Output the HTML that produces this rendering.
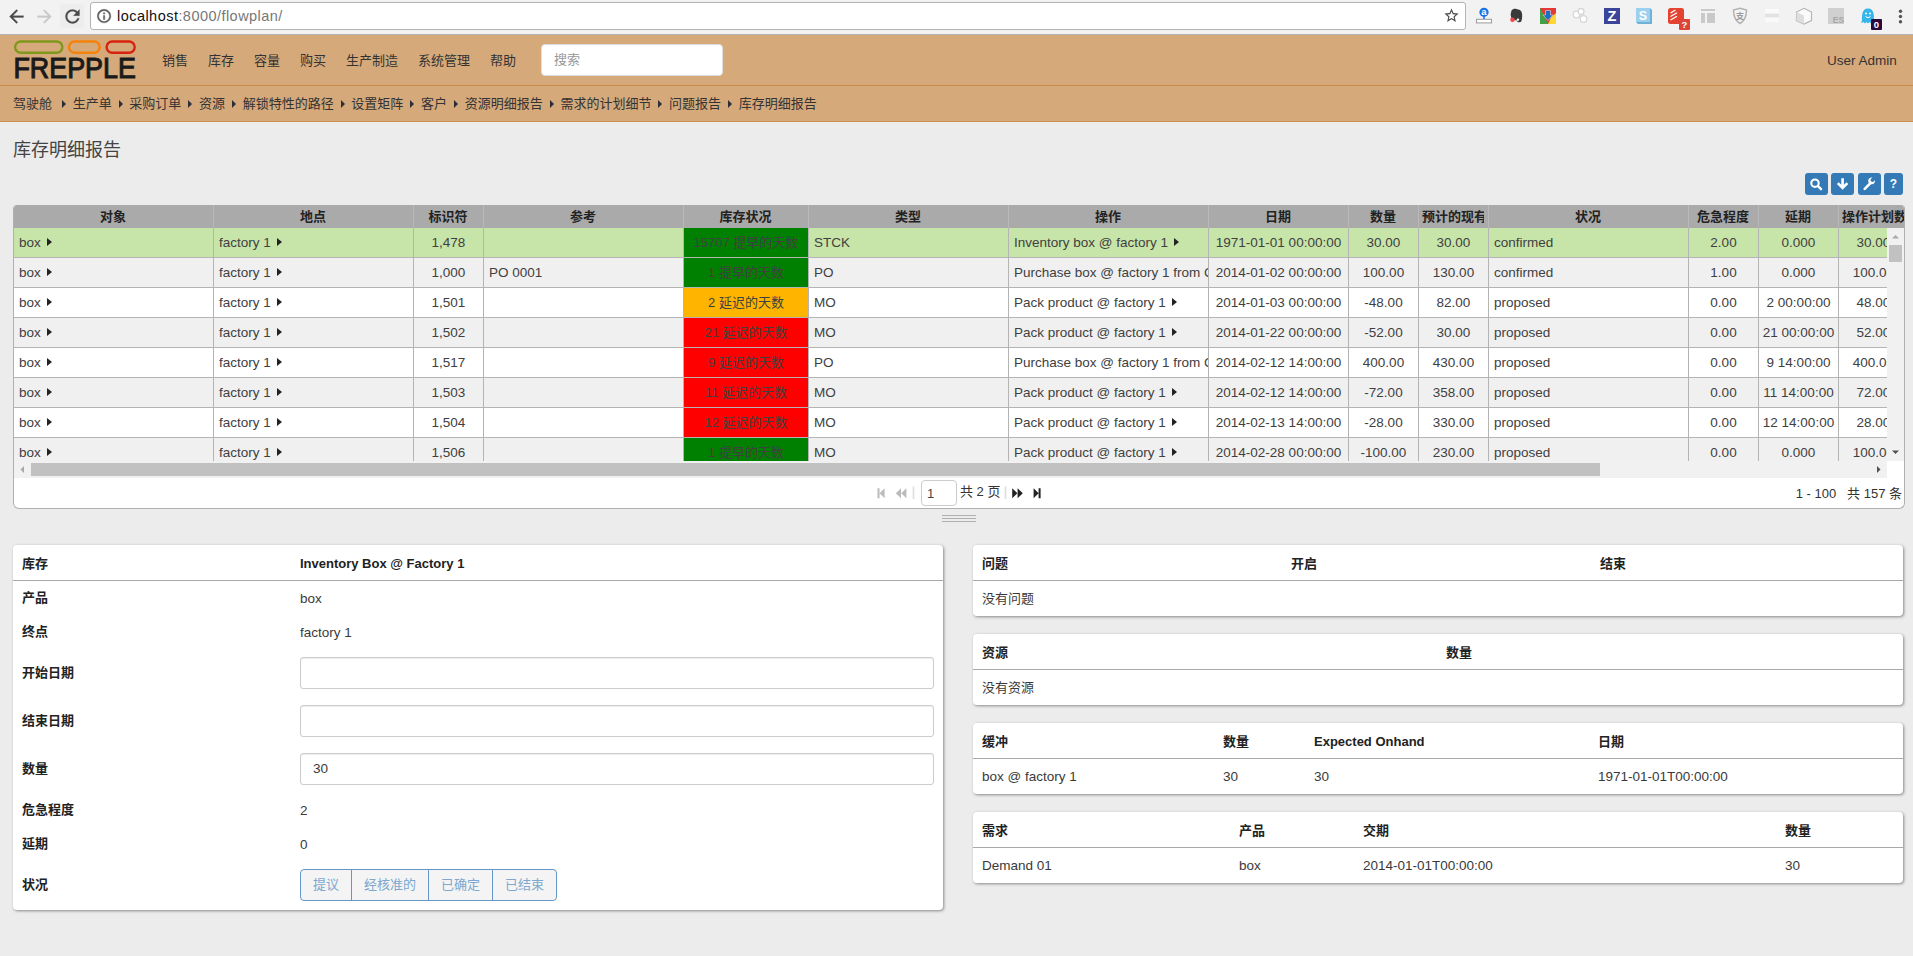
<!DOCTYPE html>
<html lang="zh-CN">
<head>
<meta charset="utf-8">
<title>库存明细报告 - frePPLe</title>
<style>
*{box-sizing:border-box}
html,body{margin:0;padding:0}
body{width:1913px;height:956px;overflow:hidden;background:#ececec;font-family:"Liberation Sans","Noto Sans CJK SC",sans-serif;font-size:13.5px;color:#3a3a3a;position:relative}
.abs{position:absolute}
/* chrome toolbar */
#chrome{left:0;top:0;width:1913px;height:35px;background:#f2f2f2;border-bottom:1px solid #b4b2b2}
#url{left:90px;top:2px;width:1376px;height:28px;background:#fff;border:1px solid #b3b3b3;border-radius:3px}
#urltxt{left:117px;top:7px;font-size:14.5px;letter-spacing:.46px;color:#777;line-height:18px;white-space:nowrap}
#urltxt b{font-weight:normal;color:#111}
/* navbar */
#nav{left:0;top:35px;width:1913px;height:87px;background:#d6a97b;border-bottom:1px solid #cc8f4e}
#navline{left:0;top:85px;width:1913px;height:1px;background:#c98a45}
.menu{top:52px;height:18px;line-height:18px;font-size:13px;color:#333;white-space:nowrap}
#search{left:541px;top:44px;width:182px;height:32px;background:#fff;border:1px solid #ddd;border-radius:4px;font-size:13px;color:#999;line-height:30px;padding-left:12px}
#crumbs{left:13px;top:95px;height:18px;line-height:18px;font-size:13px;color:#333;white-space:nowrap}
#crumbs i{display:inline-block;width:0;height:0;border-left:4px solid #2a2f3a;border-top:4px solid transparent;border-bottom:4px solid transparent;margin:0 6.67px 0 7px;vertical-align:0px}
#title{left:13px;top:137px;font-size:18px;line-height:26px;color:#444;white-space:nowrap}
/* toolbar buttons */
.tb{top:173px;height:22px;background:#337ab7;border-radius:3px}
/* grid */
#grid{left:13px;top:205px;width:1892px;height:304px;background:#fff;border:1px solid #b0b0b0;border-top:0;border-radius:4px 4px 6px 6px;overflow:hidden}
#ghead{left:0;top:0;width:1890px;height:23px;background:#aaa;white-space:nowrap;overflow:hidden;font-size:0}
.h{display:inline-block;height:23px;border-right:1px solid #b9b9b9;vertical-align:top;overflow:hidden;padding:0 4px 0 3px;text-align:center}
.h span{display:block;overflow:hidden;white-space:nowrap;font-size:13px;font-weight:bold;color:#222;line-height:24px}
#gbody{left:0;top:23px;width:1873px;height:233px;overflow:hidden}
.r{height:30px;white-space:nowrap;font-size:0;background:#fff;width:2100px}
.r.alt{background:#f0f0f0}
.r.sel{background:#c8e5a9}
.c{display:inline-block;height:30px;border-right:1px solid #b4b4b4;border-bottom:1px solid #b4b4b4;vertical-align:top;overflow:hidden;white-space:nowrap;font-size:13.5px;line-height:29px;padding:0 2px 0 5px;color:#404040}
.c.m{text-align:center;padding:0 2px}
.st-g,.st-o,.st-r{font-size:13px !important}
.st-g{background:#008000}
.st-o{background:#ffb400}
.st-r{background:#ff0000}
.tri{display:inline-block;width:0;height:0;border-left:5px solid #222;border-top:4.5px solid transparent;border-bottom:4.5px solid transparent;margin-left:6.3px;vertical-align:1px}
#vsb{left:1873px;top:23px;width:17px;height:233px;background:#f1f1f1}
#vthumb{left:2px;top:17px;width:13px;height:17px;background:#c1c1c1}
#hsb{left:0;top:256px;width:1873px;height:17px;background:#f1f1f1}
#hthumb{left:17px;top:2px;width:1569px;height:13px;background:#c1c1c1}
#pager{left:0;top:273px;width:1890px;height:30px;font-size:13px;line-height:28px;color:#333}
/* panels */
.panel{background:#fff;border-radius:4px;box-shadow:1px 1px 3px rgba(0,0,0,.42)}
.panel .hl{position:absolute;left:0;top:35px;width:100%;height:1px;background:#aaa}
.t{position:absolute;white-space:nowrap;line-height:18px;height:18px;margin-top:1px}
.t.b{font-weight:bold;color:#222;font-size:13px}
.inp{position:absolute;left:287px;width:634px;height:32px;border:1px solid #ccc;border-radius:3px;background:#fff;padding-left:12px;line-height:30px;box-shadow:inset 0 1px 1px rgba(0,0,0,.075)}
.bg{position:absolute;top:324px;height:32px;border:1px solid #6596c8;background:#f4f4f4;color:#7ba7d0;font-size:13px;line-height:30px;text-align:center}
</style>
</head>
<body>
<!-- browser chrome -->
<div id="chrome" class="abs"></div>

<svg class="abs" style="left:5.7px;top:5.5px" width="21" height="21" viewBox="0 0 24 24"><path fill="#4a4a4a" stroke="#4a4a4a" stroke-width=".3" d="M20 11H7.83l5.59-5.59L12 4l-8 8 8 8 1.41-1.41L7.83 13H20v-2z"/></svg>
<svg class="abs" style="left:33.5px;top:5.5px" width="21" height="21" viewBox="0 0 24 24"><path fill="#c9c9c9" stroke="#c9c9c9" stroke-width=".3" d="M12 4l-1.41 1.41L16.17 11H4v2h12.17l-5.58 5.59L12 20l8-8z"/></svg>
<div class="abs" style="left:60px;top:4px;width:24px;height:24px;background:#ededed;border-radius:2px"></div>
<svg class="abs" style="left:61.6px;top:5.5px" width="21" height="21" viewBox="0 0 24 24"><path fill="#4a4a4a" stroke="#4a4a4a" stroke-width=".3" d="M17.65 6.35C16.2 4.9 14.21 4 12 4c-4.42 0-7.99 3.58-7.99 8s3.57 8 7.99 8c3.73 0 6.84-2.55 7.73-6h-2.08c-.82 2.33-3.04 4-5.65 4-3.31 0-6-2.69-6-6s2.69-6 6-6c1.66 0 3.14.69 4.22 1.78L13 11h7V4l-2.35 2.35z"/></svg>
<div id="url" class="abs"></div>
<svg class="abs" style="left:95.6px;top:7.9px" width="16.2" height="16.2" viewBox="0 0 24 24"><path fill="#5a5a5a" stroke="#5a5a5a" stroke-width=".6" d="M11 17h2v-6h-2v6zm1-15C6.48 2 2 6.48 2 12s4.48 10 10 10 10-4.48 10-10S17.52 2 12 2zm0 18c-4.41 0-8-3.59-8-8s3.59-8 8-8 8 3.59 8 8-3.59 8-8 8zM11 9h2V7h-2v2z"/></svg>
<svg class="abs" style="left:1443.1px;top:7.2px" width="17" height="17" viewBox="0 0 24 24"><path fill="#4a4a4a" d="M22 9.24l-7.19-.62L12 2 9.19 8.63 2 9.24l5.46 4.73L5.82 21 12 17.27 18.18 21l-1.63-7.03L22 9.24zM12 15.4l-3.76 2.27 1-4.28-3.32-2.88 4.38-.38L12 6.1l1.71 4.04 4.38.38-3.32 2.88 1 4.28L12 15.4z"/></svg>

<div id="urltxt" class="abs"><b>localhost</b>:8000/flowplan/</div>


<svg class="abs" style="left:1470px;top:0" width="443" height="34" viewBox="1470 0 443 34" font-family="Liberation Sans, Noto Sans CJK SC, sans-serif">
<!-- 1: ruler with blue a -->
<circle cx="1484" cy="12.3" r="4.6" fill="#1a73e8"/><path d="M1484 16v3" stroke="#1a73e8" stroke-width="1.6"/>
<text x="1484" y="15.200" font-size="9.500" font-weight="bold" fill="#fff" text-anchor="middle">a</text>
<rect x="1476.5" y="19.3" width="15" height="3.6" fill="#fff" stroke="#9a9a9a" stroke-width="1"/>
<!-- 2: evernote-like -->
<path d="M1511.5 10.5c1-1.6 3-2 5-1.6 2.6.4 4.600 1.200 5.300 3.500.7 2.600.4 6.400-.4 8.600-.6 1.500-2.600 1.600-3.800 1.100-.6-.3-.4-1.300.3-1.300 1 0 1.300-.3 1.300-1.300 0-.8-.8-1.200-1.600-.9-.9.300-1 1.200-1 2.100-1.700-.3-3.300-.6-4.300-1.600-1.300-1.400-1.700-3.400-1.600-5.300z" fill="#3a3a3a"/>
<circle cx="1512.5" cy="19.800" r="2.300" fill="#f04848"/>
<!-- 3: chrome-colours download -->
<rect x="1540" y="8" width="16" height="16" fill="#e53935"/>
<path d="M1540 8v16h8l-3-6.500z" fill="#43a047"/><path d="M1556 13v11h-8l3-6.500z" fill="#fdd835"/>
<path d="M1545.500 10.500h5v4.500h2.500l-5 5.500-5-5.500h2.500z" fill="#1e6fc0" stroke="#e8f0ff" stroke-width=".5"/>
<!-- 4: three light circles -->
<g fill="#fff" stroke="#d6d6d6" stroke-width="1.3"><circle cx="1576.500" cy="14.500" r="3.300"/><circle cx="1581" cy="11.500" r="3"/><circle cx="1583.500" cy="19" r="3.300"/></g>
<!-- 5: Z -->
<rect x="1604" y="8" width="16" height="16" fill="#3c4499"/><text x="1612" y="21.300" font-size="14.500" font-weight="bold" fill="#fff" text-anchor="middle">Z</text>
<!-- 6: S cube -->
<path d="M1636 8h14l2 2v14h-14l-2-2z" fill="#6fb0d8"/><rect x="1636" y="8" width="14" height="14" fill="#9bd0ee"/><text x="1643" y="19.500" font-size="12.500" font-weight="bold" fill="#fff" text-anchor="middle">S</text>
<!-- 7: todoist + ? badge -->
<rect x="1668" y="8" width="16" height="16" rx="2.500" fill="#e44332"/>
<path d="M1670.500 13l5-3M1670.500 16.500l6.500-3.800M1670.500 20l6.500-3.800" stroke="#fff" stroke-width="1.300" fill="none"/>
<rect x="1679" y="19" width="11" height="11" rx="1" fill="#db4437"/><text x="1684.500" y="28.300" font-size="9.500" font-weight="bold" fill="#fff" text-anchor="middle">?</text>
<!-- 8: layout -->
<g fill="#c9c9c9"><rect x="1701" y="9" width="14" height="2"/><rect x="1701" y="13" width="4" height="10"/><rect x="1707" y="13" width="8" height="10"/></g>
<!-- 9: shield -->
<path d="M1740 8.300l6.500 1.700c0 6-1.500 10.500-6.500 13.500-5-3-6.500-7.500-6.500-13.500z" fill="#f4f4f4" stroke="#b2b2b2" stroke-width="1.500"/>
<text x="1740" y="19.300" font-size="8.500" font-weight="bold" fill="#9c9c9c" text-anchor="middle">支</text>
<!-- 10: faint -->
<rect x="1765" y="9" width="14" height="13" fill="#fafafa"/><rect x="1765" y="13.500" width="14" height="4" fill="#e3e3e3"/>
<!-- 11: cube -->
<path d="M1804 8.300l7.500 3.700v8.500l-7.500 3.500-7.500-3.500v-8.500z" fill="#fafafa" stroke="#b5b5b5" stroke-width="1.200"/><path d="M1804 15.500v8.500l-7.500-3.500v-8.500zM1804 15.500l-7.500-3.500" fill="#dedede" stroke="none"/>
<!-- 12: ES -->
<rect x="1828" y="8" width="16" height="16" fill="#d0d0d0"/><text x="1838.500" y="23" font-size="8.500" font-weight="bold" fill="#a6a6a6" text-anchor="middle">ES</text>
<!-- 13: ghost + badge -->
<path d="M1862 20.500c0-4-.5-12 6-12s6 8 6 12l1 2.500-2.500-1-1.500 1.500-1.500-1.500-1.500 1.500-1.500-1.500-1.500 1.500-1.500-1.500-2.500 1z" fill="#35b5e9"/>
<circle cx="1866" cy="13.500" r="1" fill="#fff"/><circle cx="1870" cy="13.500" r="1" fill="#fff"/><path d="M1865.500 16.500q2.500 2.500 5 0" stroke="#fff" stroke-width="1" fill="none"/>
<rect x="1871" y="19" width="11" height="11" rx="1" fill="#2a0a3c"/><text x="1876.500" y="28" font-size="9.500" font-weight="bold" fill="#fff" text-anchor="middle">0</text>
<!-- 14: menu dots -->
<g fill="#555"><circle cx="1900.500" cy="11.300" r="1.700"/><circle cx="1900.500" cy="16.500" r="1.700"/><circle cx="1900.500" cy="21.700" r="1.700"/></g>
</svg>
<!-- navbar -->
<div id="nav" class="abs"></div>
<div id="navline" class="abs"></div>

<svg class="abs" style="left:10px;top:38px" width="132" height="46" viewBox="0 0 132 46">
<rect x="5.1" y="3.5" width="47.3" height="11.2" rx="5.6" fill="none" stroke="#7f981c" stroke-width="2.4"/>
<rect x="59" y="3.5" width="30.7" height="11.2" rx="5.6" fill="none" stroke="#f5820b" stroke-width="2.4"/>
<rect x="96.6" y="3.5" width="28.1" height="11.2" rx="5.6" fill="none" stroke="#d7230f" stroke-width="2.4"/>
<text x="3.4" y="40.2" font-family="Liberation Sans, sans-serif" font-size="30.3" fill="#1a1a1a" stroke="#1a1a1a" stroke-width="1.1" textLength="122.5" lengthAdjust="spacingAndGlyphs">FREPPLE</text>
</svg>
<div class="abs menu" style="left:162px">销售</div>
<div class="abs menu" style="left:208px">库存</div>
<div class="abs menu" style="left:254px">容量</div>
<div class="abs menu" style="left:300px">购买</div>
<div class="abs menu" style="left:346px">生产制造</div>
<div class="abs menu" style="left:418px">系统管理</div>
<div class="abs menu" style="left:490px">帮助</div>
<div id="search" class="abs">搜索</div>
<div class="abs menu" style="left:1827px;top:52px;font-size:13.5px">User Admin</div>
<div id="crumbs" class="abs">驾驶舱<i style="margin-left:10px"></i>生产单<i></i>采购订单<i></i>资源<i></i>解锁特性的路径<i></i>设置矩阵<i></i>客户<i></i>资源明细报告<i></i>需求的计划细节<i></i>问题报告<i></i>库存明细报告</div>

<div id="title" class="abs">库存明细报告</div>

<div class="abs tb" style="left:1805px;width:23px"><svg width="23" height="22" viewBox="0 0 23 22"><circle cx="10" cy="10.2" r="3.7" fill="none" stroke="#fff" stroke-width="2.1"/><path d="M13 13.2l3 3" stroke="#fff" stroke-width="2.4" stroke-linecap="round"/></svg></div>
<div class="abs tb" style="left:1831px;width:23px"><svg width="23" height="22" viewBox="0 0 23 22"><path d="M11.6 5.2v9.4M6.8 10.2l4.8 4.8 4.8-4.8" fill="none" stroke="#fff" stroke-width="2.6" stroke-linejoin="miter"/></svg></div>
<div class="abs tb" style="left:1858px;width:23px"><svg width="23" height="22" viewBox="0 0 23 22"><path d="M6.7 15.8l6-6" stroke="#fff" stroke-width="2.6" stroke-linecap="round"/><path d="M16.9 7.2a3.4 3.4 0 1 1-2.6-2.6l-1.9 1.9.5 2.1 2.1.5z" fill="#fff"/></svg></div>
<div class="abs tb" style="left:1884px;width:19px;color:#fff;font-weight:bold;font-size:12px;line-height:22px;text-align:center">?</div>

<!-- grid -->
<div id="grid" class="abs">
<div id="ghead" class="abs"><div class="h" style="width:200px"><span>对象</span></div><div class="h" style="width:200px"><span>地点</span></div><div class="h" style="width:70px"><span>标识符</span></div><div class="h" style="width:200px"><span>参考</span></div><div class="h" style="width:125px"><span>库存状况</span></div><div class="h" style="width:200px"><span>类型</span></div><div class="h" style="width:200px"><span>操作</span></div><div class="h" style="width:140px"><span>日期</span></div><div class="h" style="width:70px"><span>数量</span></div><div class="h" style="width:70px"><span>预计的现有库存</span></div><div class="h" style="width:200px"><span>状况</span></div><div class="h" style="width:70px"><span>危急程度</span></div><div class="h" style="width:80px"><span>延期</span></div><div class="h" style="width:70px"><span>操作计划数量</span></div></div>
<div id="gbody" class="abs">
<div class="r sel"><div class="c l" style="width:200px">box<i class="tri"></i></div><div class="c l" style="width:200px">factory 1<i class="tri"></i></div><div class="c m" style="width:70px">1,478</div><div class="c l" style="width:200px"></div><div class="c m st-g" style="width:125px">15707 提早的天数</div><div class="c l" style="width:200px">STCK</div><div class="c l" style="width:200px">Inventory box @ factory 1<i class="tri"></i></div><div class="c m" style="width:140px">1971-01-01 00:00:00</div><div class="c m" style="width:70px">30.00</div><div class="c m" style="width:70px">30.00</div><div class="c l" style="width:200px">confirmed</div><div class="c m" style="width:70px">2.00</div><div class="c m" style="width:80px">0.000</div><div class="c m" style="width:70px">30.00</div></div>
<div class="r alt"><div class="c l" style="width:200px">box<i class="tri"></i></div><div class="c l" style="width:200px">factory 1<i class="tri"></i></div><div class="c m" style="width:70px">1,000</div><div class="c l" style="width:200px">PO 0001</div><div class="c m st-g" style="width:125px">1 提早的天数</div><div class="c l" style="width:200px">PO</div><div class="c l" style="width:200px">Purchase box @ factory 1 from Component supplier</div><div class="c m" style="width:140px">2014-01-02 00:00:00</div><div class="c m" style="width:70px">100.00</div><div class="c m" style="width:70px">130.00</div><div class="c l" style="width:200px">confirmed</div><div class="c m" style="width:70px">1.00</div><div class="c m" style="width:80px">0.000</div><div class="c m" style="width:70px">100.00</div></div>
<div class="r"><div class="c l" style="width:200px">box<i class="tri"></i></div><div class="c l" style="width:200px">factory 1<i class="tri"></i></div><div class="c m" style="width:70px">1,501</div><div class="c l" style="width:200px"></div><div class="c m st-o" style="width:125px">2 延迟的天数</div><div class="c l" style="width:200px">MO</div><div class="c l" style="width:200px">Pack product @ factory 1<i class="tri"></i></div><div class="c m" style="width:140px">2014-01-03 00:00:00</div><div class="c m" style="width:70px">-48.00</div><div class="c m" style="width:70px">82.00</div><div class="c l" style="width:200px">proposed</div><div class="c m" style="width:70px">0.00</div><div class="c m" style="width:80px">2 00:00:00</div><div class="c m" style="width:70px">48.00</div></div>
<div class="r alt"><div class="c l" style="width:200px">box<i class="tri"></i></div><div class="c l" style="width:200px">factory 1<i class="tri"></i></div><div class="c m" style="width:70px">1,502</div><div class="c l" style="width:200px"></div><div class="c m st-r" style="width:125px">21 延迟的天数</div><div class="c l" style="width:200px">MO</div><div class="c l" style="width:200px">Pack product @ factory 1<i class="tri"></i></div><div class="c m" style="width:140px">2014-01-22 00:00:00</div><div class="c m" style="width:70px">-52.00</div><div class="c m" style="width:70px">30.00</div><div class="c l" style="width:200px">proposed</div><div class="c m" style="width:70px">0.00</div><div class="c m" style="width:80px">21 00:00:00</div><div class="c m" style="width:70px">52.00</div></div>
<div class="r"><div class="c l" style="width:200px">box<i class="tri"></i></div><div class="c l" style="width:200px">factory 1<i class="tri"></i></div><div class="c m" style="width:70px">1,517</div><div class="c l" style="width:200px"></div><div class="c m st-r" style="width:125px">9 延迟的天数</div><div class="c l" style="width:200px">PO</div><div class="c l" style="width:200px">Purchase box @ factory 1 from Component supplier</div><div class="c m" style="width:140px">2014-02-12 14:00:00</div><div class="c m" style="width:70px">400.00</div><div class="c m" style="width:70px">430.00</div><div class="c l" style="width:200px">proposed</div><div class="c m" style="width:70px">0.00</div><div class="c m" style="width:80px">9 14:00:00</div><div class="c m" style="width:70px">400.00</div></div>
<div class="r alt"><div class="c l" style="width:200px">box<i class="tri"></i></div><div class="c l" style="width:200px">factory 1<i class="tri"></i></div><div class="c m" style="width:70px">1,503</div><div class="c l" style="width:200px"></div><div class="c m st-r" style="width:125px">11 延迟的天数</div><div class="c l" style="width:200px">MO</div><div class="c l" style="width:200px">Pack product @ factory 1<i class="tri"></i></div><div class="c m" style="width:140px">2014-02-12 14:00:00</div><div class="c m" style="width:70px">-72.00</div><div class="c m" style="width:70px">358.00</div><div class="c l" style="width:200px">proposed</div><div class="c m" style="width:70px">0.00</div><div class="c m" style="width:80px">11 14:00:00</div><div class="c m" style="width:70px">72.00</div></div>
<div class="r"><div class="c l" style="width:200px">box<i class="tri"></i></div><div class="c l" style="width:200px">factory 1<i class="tri"></i></div><div class="c m" style="width:70px">1,504</div><div class="c l" style="width:200px"></div><div class="c m st-r" style="width:125px">12 延迟的天数</div><div class="c l" style="width:200px">MO</div><div class="c l" style="width:200px">Pack product @ factory 1<i class="tri"></i></div><div class="c m" style="width:140px">2014-02-13 14:00:00</div><div class="c m" style="width:70px">-28.00</div><div class="c m" style="width:70px">330.00</div><div class="c l" style="width:200px">proposed</div><div class="c m" style="width:70px">0.00</div><div class="c m" style="width:80px">12 14:00:00</div><div class="c m" style="width:70px">28.00</div></div>
<div class="r alt"><div class="c l" style="width:200px">box<i class="tri"></i></div><div class="c l" style="width:200px">factory 1<i class="tri"></i></div><div class="c m" style="width:70px">1,506</div><div class="c l" style="width:200px"></div><div class="c m st-g" style="width:125px">1 提早的天数</div><div class="c l" style="width:200px">MO</div><div class="c l" style="width:200px">Pack product @ factory 1<i class="tri"></i></div><div class="c m" style="width:140px">2014-02-28 00:00:00</div><div class="c m" style="width:70px">-100.00</div><div class="c m" style="width:70px">230.00</div><div class="c l" style="width:200px">proposed</div><div class="c m" style="width:70px">0.00</div><div class="c m" style="width:80px">0.000</div><div class="c m" style="width:70px">100.00</div></div>

</div>
<div id="vsb" class="abs"><div id="vthumb" class="abs"></div><svg class="abs" style="left:0;top:0" width="17" height="233" viewBox="0 0 17 233"><path d="M5 10.5l3.5-3.5 3.5 3.5z" fill="#a8a8a8"/><path d="M5 222.5l3.5 3.5 3.5-3.5z" fill="#505050"/></svg></div>
<div id="hsb" class="abs"><div id="hthumb" class="abs"></div><svg class="abs" style="left:0;top:0" width="1873" height="17" viewBox="0 0 1873 17"><path d="M10 5l-3.5 3.5 3.5 3.5z" fill="#a8a8a8"/><path d="M1863 5l3.5 3.5-3.5 3.5z" fill="#505050"/></svg></div>
<div id="pager" class="abs">
<svg class="abs" style="left:860px;top:8px" width="200" height="16" viewBox="0 0 200 16">
<path d="M3.5 2.2h2v10h-2zM10.6 2.2v10l-5-5z" fill="#bbb"/>
<path d="M27 2.2v10l-5.2-5zM32.4 2.2v10l-5.2-5z" fill="#bbb"/>
<path d="M39.5 0.5v12.5M131.5 0.5v12.5" stroke="#ddd" stroke-width="1.6"/>
<path d="M138.2 2.2v10l5.2-5zM143.6 2.2v10l5.2-5z" fill="#222"/>
<path d="M159.6 2.2v10l5-5zM164.6 2.2h2v10h-2z" fill="#222"/>
</svg>
<div class="abs" style="left:907px;top:2px;width:36px;height:26px;border:1px solid #ccc;border-radius:4px;background:#fff;line-height:25px;padding-left:5px;font-size:13px;color:#444">1</div>
<span class="abs" style="left:946px">共 2 页</span>
<span class="abs" style="right:2px;top:2px">1 - 100&nbsp;&nbsp; 共 157 条</span>
</div>
</div>

<div class="abs" style="left:942px;top:515px;width:34px;height:7px;background:linear-gradient(#b0b0b0 0 1px,transparent 1px 3px,#b0b0b0 3px 4px,transparent 4px 6px,#b0b0b0 6px 7px)"></div>
<!-- left panel -->
<div class="abs panel" style="left:13px;top:545px;width:930px;height:365px">
<div class="hl"></div>
<div class="t b" style="left:9px;top:9px">库存</div><div class="t b" style="left:287px;top:9px">Inventory Box @ Factory 1</div>
<div class="t b" style="left:9px;top:43px">产品</div><div class="t" style="left:287px;top:44px">box</div>
<div class="t b" style="left:9px;top:77px">终点</div><div class="t" style="left:287px;top:78px">factory 1</div>
<div class="t b" style="left:9px;top:118px">开始日期</div><div class="inp" style="top:112px"></div>
<div class="t b" style="left:9px;top:166px">结束日期</div><div class="inp" style="top:160px"></div>
<div class="t b" style="left:9px;top:214px">数量</div><div class="inp" style="top:208px">30</div>
<div class="t b" style="left:9px;top:255px">危急程度</div><div class="t" style="left:287px;top:256px">2</div>
<div class="t b" style="left:9px;top:289px">延期</div><div class="t" style="left:287px;top:290px">0</div>
<div class="t b" style="left:9px;top:330px">状况</div>
<div class="bg" style="left:287px;width:52px;border-radius:4px 0 0 4px">提议</div>
<div class="bg" style="left:338px;width:78px">经核准的</div>
<div class="bg" style="left:415px;width:65px">已确定</div>
<div class="bg" style="left:479px;width:65px;border-radius:0 4px 4px 0">已结束</div>
</div>

<!-- right panels -->
<div class="abs panel" style="left:973px;top:545px;width:930px;height:71px">
<div class="hl"></div>
<div class="t b" style="left:9px;top:9px">问题</div><div class="t b" style="left:318px;top:9px">开启</div><div class="t b" style="left:627px;top:9px">结束</div>
<div class="t" style="left:9px;top:44px;font-size:13px">没有问题</div>
</div>
<div class="abs panel" style="left:973px;top:634px;width:930px;height:71px">
<div class="hl"></div>
<div class="t b" style="left:9px;top:9px">资源</div><div class="t b" style="left:473px;top:9px">数量</div>
<div class="t" style="left:9px;top:44px;font-size:13px">没有资源</div>
</div>
<div class="abs panel" style="left:973px;top:723px;width:930px;height:71px">
<div class="hl"></div>
<div class="t b" style="left:9px;top:9px">缓冲</div><div class="t b" style="left:250px;top:9px">数量</div><div class="t b" style="left:341px;top:9px">Expected Onhand</div><div class="t b" style="left:625px;top:9px">日期</div>
<div class="t" style="left:9px;top:44px">box @ factory 1</div><div class="t" style="left:250px;top:44px">30</div><div class="t" style="left:341px;top:44px">30</div><div class="t" style="left:625px;top:44px">1971-01-01T00:00:00</div>
</div>
<div class="abs panel" style="left:973px;top:812px;width:930px;height:71px">
<div class="hl"></div>
<div class="t b" style="left:9px;top:9px">需求</div><div class="t b" style="left:266px;top:9px">产品</div><div class="t b" style="left:390px;top:9px">交期</div><div class="t b" style="left:812px;top:9px">数量</div>
<div class="t" style="left:9px;top:44px">Demand 01</div><div class="t" style="left:266px;top:44px">box</div><div class="t" style="left:390px;top:44px">2014-01-01T00:00:00</div><div class="t" style="left:812px;top:44px">30</div>
</div>

</body>
</html>
